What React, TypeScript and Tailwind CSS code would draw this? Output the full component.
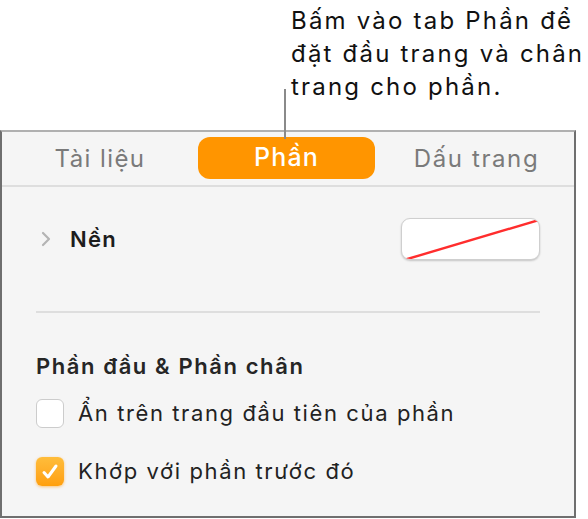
import React from "react";

export default function App() {
  return (
    <div
      className="relative w-[588px] h-[519px] bg-white overflow-hidden"
      style={{ fontFamily: "Inter, 'Noto Sans', sans-serif" }}
    >
      {/* callout */}
      <div className="h-[130px] pl-[291px] pt-[4px]">
        <p className="text-[24px] leading-[33px] text-[#111] tracking-[2.2px]">
          Bấm vào tab Phần để
          <br />
          đặt đầu trang và chân
          <br />
          trang cho phần.
        </p>
      </div>
      <div className="absolute left-[284px] top-[89px] w-[2px] h-[50px] bg-[#8a8a8a] z-10" />

      {/* panel */}
      <div className="w-[576px] h-[388px] bg-[#f5f5f5] border-t-2 border-t-[#b0b0b0] border-x-2 border-x-[#6f6f6f] border-b-2 border-b-[#6f6f6f] flex flex-col">
        {/* tabs */}
        <div className="h-[55px] flex items-center border-b-2 border-[#dedede]">
          <div className="w-[196px] text-center text-[24px] tracking-[1.4px] text-[#7a7a7a]">Tài liệu</div>
          <div className="w-[177px] h-[42px] mt-[-2px] rounded-[12px] bg-[#ff9500] text-white text-[25px] tracking-[1.2px] font-medium flex items-center justify-center">
            Phần
          </div>
          <div className="flex-1 text-center text-[24px] tracking-[1.6px] text-[#7a7a7a] pl-[4px]">Dấu trang</div>
        </div>

        {/* Nen row */}
        <div className="px-[34px]">
          <div className="h-[126px] pb-[22px] flex items-center">
            <svg width="12" height="18" viewBox="0 0 12 18" className="ml-[4px]">
              <path d="M3 3l6 6-6 6" fill="none" stroke="#b4b4b4" strokeWidth="2.2" strokeLinecap="round" strokeLinejoin="round" />
            </svg>
            <span className="ml-[18px] text-[22px] tracking-[1.3px] font-semibold text-[#1d1d1d]">Nền</span>
            <div className="ml-auto w-[139px] h-[42px] rounded-[9px] bg-white border border-[#cfcfcf] shadow-[0_1px_2px_rgba(0,0,0,0.2)] overflow-hidden">
              <svg width="139" height="42" viewBox="0 0 139 42">
                <line x1="2" y1="41" x2="137" y2="1" stroke="#ff2d2d" strokeWidth="2.4" />
              </svg>
            </div>
          </div>
          <div className="h-[2px] bg-[#dedede] mt-[-2px]" />

          <div className="pt-[38px] text-[22px] tracking-[1.6px] font-semibold text-[#262626] leading-[30px]">
            Phần đầu &amp; Phần chân
          </div>
          <div className="mt-[16px] flex items-center gap-[14px]">
            <div className="w-[28px] h-[29px] rounded-[6px] bg-white border border-[#cccccc]" />
            <span className="text-[22px] tracking-[1.6px] text-[#222]">Ẩn trên trang đầu tiên của phần</span>
          </div>
          <div className="mt-[25px] flex items-center gap-[14px]">
            <div className="w-[28px] h-[29px] rounded-[6px] bg-gradient-to-b from-[#ffbd3a] to-[#ff9f0a] shadow-[0_1px_3px_rgba(255,150,0,0.5)] flex items-center justify-center">
              <svg width="20" height="20" viewBox="0 0 20 20">
                <path d="M4 10.5l4 4.5 8-11" fill="none" stroke="white" strokeWidth="3" strokeLinecap="round" strokeLinejoin="round" />
              </svg>
            </div>
            <span className="text-[22px] tracking-[1.6px] text-[#222]">Khớp với phần trước đó</span>
          </div>
        </div>
      </div>
    </div>
  );
}
